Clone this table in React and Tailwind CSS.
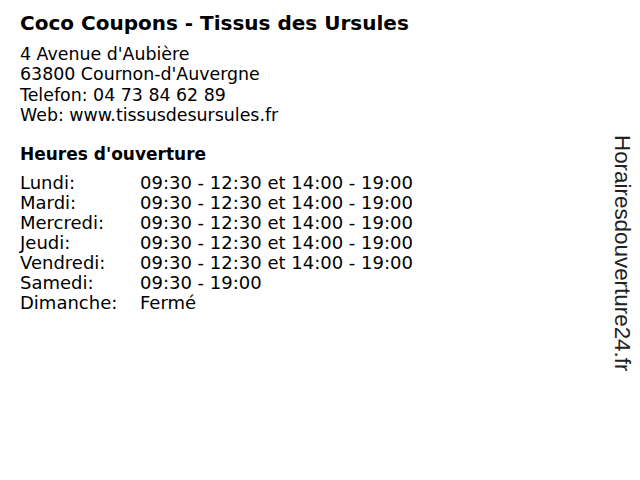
const hours = [
  ['Lundi:', '09:30 - 12:30 et 14:00 - 19:00'],
  ['Mardi:', '09:30 - 12:30 et 14:00 - 19:00'],
  ['Mercredi:', '09:30 - 12:30 et 14:00 - 19:00'],
  ['Jeudi:', '09:30 - 12:30 et 14:00 - 19:00'],
  ['Vendredi:', '09:30 - 12:30 et 14:00 - 19:00'],
  ['Samedi:', '09:30 - 19:00'],
  ['Dimanche:', 'Fermé'],
];

export default function App() {
  return (
    <div className="w-[640px] h-[480px] bg-white text-black flex font-['DejaVu_Sans',sans-serif]">
      <div className="flex-1 pl-5 pt-[11px]">
        <h1 className="text-[20px] font-bold leading-6">Coco Coupons - Tissus des Ursules</h1>
        <div className="mt-[9px] text-[17.4px] leading-[20.3px]">
          <p>4 Avenue d'Aubière</p>
          <p>63800 Cournon-d'Auvergne</p>
          <p>Telefon: 04 73 84 62 89</p>
          <p>Web: www.tissusdesursules.fr</p>
        </div>
        <h2 className="mt-[19px] text-[17px] font-bold leading-5">Heures d'ouverture</h2>
        <div className="mt-[9px] text-[18px] leading-5">
          {hours.map(([day, time]) => (
            <div key={day} className="flex">
              <span className="w-[120px]">{day}</span>
              <span>{time}</span>
            </div>
          ))}
        </div>
      </div>
      <div className="w-[36px] pt-[135px] flex justify-center">
        <span className="[writing-mode:vertical-rl] font-['Liberation_Sans',sans-serif] text-[22.4px] text-[#222] leading-5">
          Horairesdouverture24.fr
        </span>
      </div>
    </div>
  );
}
